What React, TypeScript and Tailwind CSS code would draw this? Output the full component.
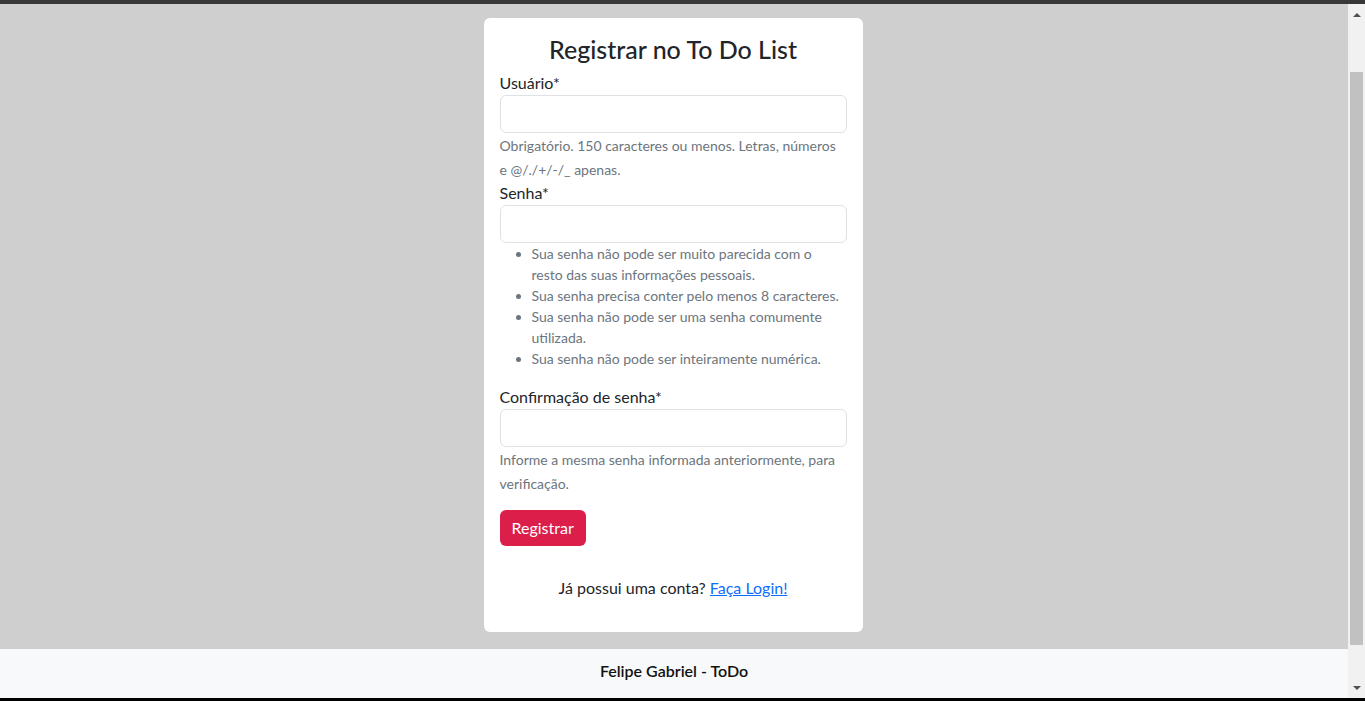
const font = { fontFamily: "Lato, 'Noto Sans', sans-serif" }

function Field({ label, children }: { label: string; children?: React.ReactNode }) {
	return (
		<div>
			<label className="block text-base leading-6 text-[#212529]">{label}</label>
			<input
				type="password"
				className="block h-[38px] w-full rounded-md border border-[#dee2e6] bg-white px-3 outline-none"
			/>
			{children}
		</div>
	)
}

const rules = [
	"Sua senha não pode ser muito parecida com o resto das suas informações pessoais.",
	"Sua senha precisa conter pelo menos 8 caracteres.",
	"Sua senha não pode ser uma senha comumente utilizada.",
	"Sua senha não pode ser inteiramente numérica.",
]

export default function App() {
	return (
		<div className="flex h-[701px] flex-col overflow-hidden" style={font}>
			<div className="h-[4px] bg-[#383838]" />
			<div className="flex flex-1">
				<div className="flex flex-1 flex-col bg-[#cfcfcf]">
					<main className="flex flex-1 justify-center pt-[14px]">
						<div className="h-[614px] w-[379px] -translate-x-px rounded-md bg-white px-4 pt-4">
							<h3 className="mb-[6px] text-center text-[25px] font-medium leading-[31px] text-[#212529]">
								Registrar no To Do List
							</h3>
							<Field label="Usuário*">
								<div className="mt-px text-sm leading-6 text-[#6c757d]">
									Obrigatório. 150 caracteres ou menos. Letras, números e @/./+/-/_ apenas.
								</div>
							</Field>
							<div className="-mt-px">
								<Field label="Senha*">
									<ul className="mb-4 list-disc pl-8 text-sm leading-[21px] text-[#6c757d]">
										{rules.map((r) => (
											<li key={r}>{r}</li>
										))}
									</ul>
								</Field>
							</div>
							<Field label="Confirmação de senha*">
								<div className="mt-px text-sm leading-6 text-[#6c757d]">
									Informe a mesma senha informada anteriormente, para verificação.
								</div>
							</Field>
							<button className="mt-[14px] h-9 rounded-md bg-[#dc1e4a] px-3 text-base text-white">
								Registrar
							</button>
							<p className="mt-[30px] text-center text-base leading-6 text-[#212529]">
								Já possui uma conta?{" "}
								<a href="#" className="text-[#0d6efd] underline">
									Faça Login!
								</a>
							</p>
						</div>
					</main>
					<footer className="flex h-[49px] items-center justify-center bg-[#f8f9fa] pb-[5px] text-base font-semibold text-[#111]">
						Felipe Gabriel - ToDo
					</footer>
				</div>
				<div className="flex w-[17px] flex-col items-center bg-[#f1f1f1]">
					<div className="mt-[9px] h-0 w-0 border-x-4 border-b-4 border-x-transparent border-b-[#505050]" />
					<div className="mt-[55px] h-[573px] w-[13px] bg-[#c1c1c1]" />
					<div className="mt-auto mb-[8px] h-0 w-0 border-x-4 border-t-4 border-x-transparent border-t-[#505050]" />
				</div>
			</div>
			<div className="h-[3px] bg-black" />
		</div>
	)
}
